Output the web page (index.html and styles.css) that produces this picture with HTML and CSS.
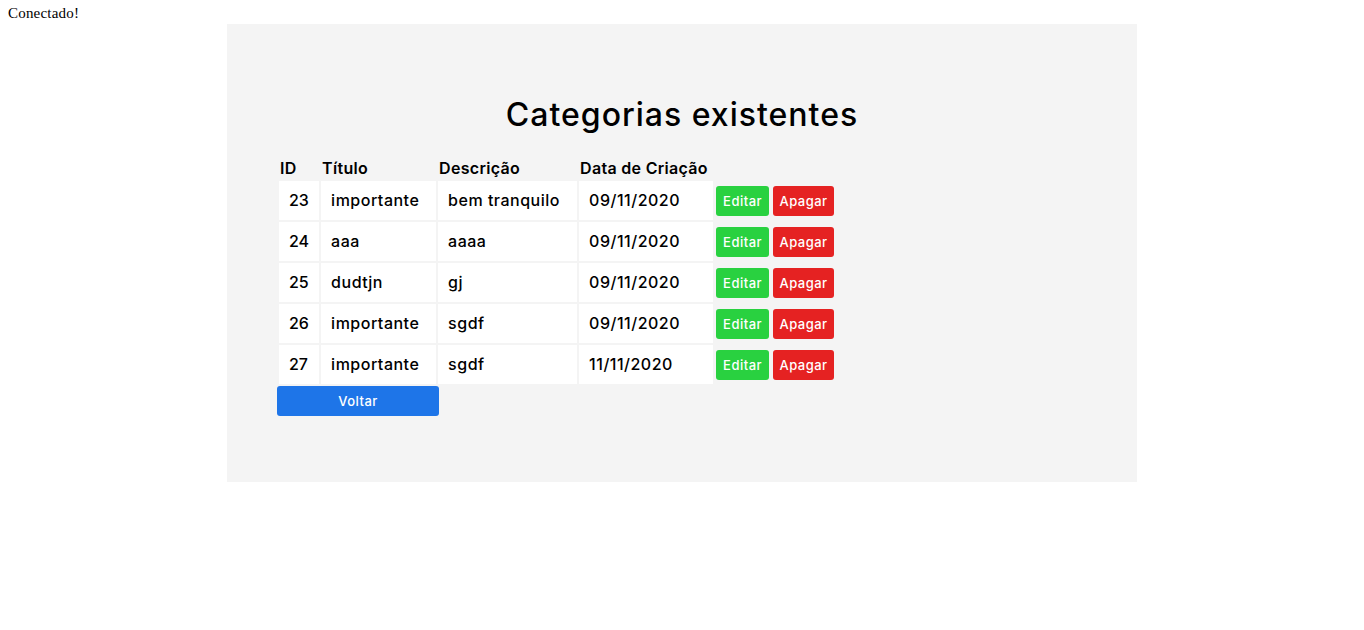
FILE: index.html
```html
<!DOCTYPE html>
<html lang="pt-BR">
<head>
<meta charset="utf-8">
<title>Categorias</title>
<link rel="stylesheet" href="styles.css">
</head>
<body>
<div class="status">Conectado!</div>
<div class="panel">
  <h1 class="title">Categorias existentes</h1>
  <table class="cat-table">
    <thead>
      <tr>
        <th class="c-id">ID</th>
        <th class="c-title">Título</th>
        <th class="c-desc">Descrição</th>
        <th class="c-date">Data de Criação</th>
        <th class="c-act"></th>
      </tr>
    </thead>
    <tbody>
      <tr>
        <td class="cell num">23</td>
        <td class="cell">importante</td>
        <td class="cell">bem tranquilo</td>
        <td class="cell">09/11/2020</td>
        <td class="actions"><button class="btn btn-edit">Editar</button> <button class="btn btn-del">Apagar</button></td>
      </tr>
      <tr>
        <td class="cell num">24</td>
        <td class="cell">aaa</td>
        <td class="cell">aaaa</td>
        <td class="cell">09/11/2020</td>
        <td class="actions"><button class="btn btn-edit">Editar</button> <button class="btn btn-del">Apagar</button></td>
      </tr>
      <tr>
        <td class="cell num">25</td>
        <td class="cell">dudtjn</td>
        <td class="cell">gj</td>
        <td class="cell">09/11/2020</td>
        <td class="actions"><button class="btn btn-edit">Editar</button> <button class="btn btn-del">Apagar</button></td>
      </tr>
      <tr>
        <td class="cell num">26</td>
        <td class="cell">importante</td>
        <td class="cell">sgdf</td>
        <td class="cell">09/11/2020</td>
        <td class="actions"><button class="btn btn-edit">Editar</button> <button class="btn btn-del">Apagar</button></td>
      </tr>
      <tr>
        <td class="cell num">27</td>
        <td class="cell">importante</td>
        <td class="cell">sgdf</td>
        <td class="cell">11/11/2020</td>
        <td class="actions"><button class="btn btn-edit">Editar</button> <button class="btn btn-del">Apagar</button></td>
      </tr>
    </tbody>
  </table>
  <button class="btn btn-back">Voltar</button>
</div>
</body>
</html>
```
FILE: styles.css
```css
html, body {
  background: #ffffff;
}
body {
  margin: 5px 8px 8px;
}
.status {
  font-family: "Liberation Serif", "Times New Roman", serif;
  font-size: 15px;
  line-height: 17px;
  letter-spacing: 0.2px;
  color: #000;
}
.panel {
  width: 910px;
  box-sizing: border-box;
  margin: 2px auto 0;
  padding: 50px 50px 66px;
  background: #f4f4f4;
  font-family: "Inter", "Open Sans", sans-serif;
  color: #000;
}
.title {
  margin: 21px 0 22px;
  font-size: 32px;
  line-height: 39px;
  font-weight: 500;
  text-align: center;
  letter-spacing: 1px;
}
.cat-table {
  border-spacing: 2px;
  font-size: 16px;
  line-height: 19px;
}
.cat-table th {
  padding: 1px;
  text-align: left;
  font-weight: 600;
  letter-spacing: 0.3px;
}
.c-id { width: 38px; }
.c-title { width: 113px; }
.c-desc { width: 137px; }
.c-date { width: 132px; }
.cell {
  background: #ffffff;
  padding: 10px;
  font-weight: 500;
  letter-spacing: 0.5px;
  white-space: nowrap;
}
.cell.num {
  letter-spacing: 0;
}
.actions {
  padding: 1px;
  white-space: nowrap;
  font-size: 14px;
}
.btn {
  font-family: "Inter", "Open Sans", sans-serif;
  font-size: 13px;
  font-weight: 500;
  color: #ffffff;
  border: none;
  border-radius: 3px;
  height: 30px;
  padding: 0;
  vertical-align: middle;
  letter-spacing: 0.5px;
  cursor: pointer;
}
.btn-edit {
  background: #29d140;
  width: 53px;
}
.btn-del {
  background: #e52222;
  width: 61px;
}
.btn-back {
  display: block;
  background: #1e75e8;
  width: 162px;
}
```
